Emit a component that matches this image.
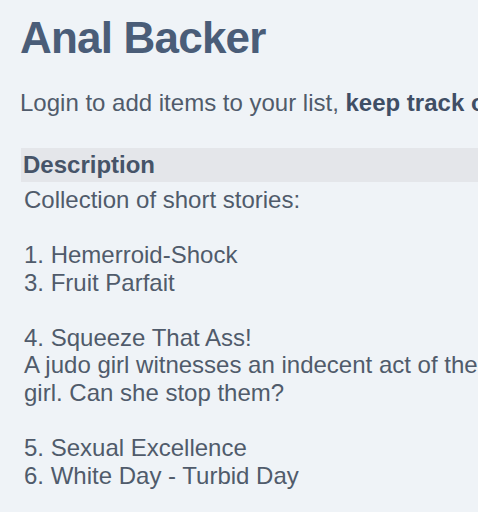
export default function App() {
  const desc = `Collection of short stories:

1. Hemerroid-Shock
3. Fruit Parfait

4. Squeeze That Ass!
A judo girl witnesses an indecent act of the swimming club captain with a
girl. Can she stop them?

5. Sexual Excellence
6. White Day - Turbid Day`;
  return (
    <div className="h-[512px] w-[478px] overflow-hidden bg-[#eff3f7] font-['Liberation_Sans',Arial,sans-serif]">
      <div className="w-[900px] pl-[20px] pt-[13px]">
        <h1 className="text-[44px] leading-[50.6px] font-bold text-[#4a5d78] tracking-[-0.8px] whitespace-nowrap">
          Anal Backer
        </h1>
        <p className="mt-[25px] text-[24px] leading-[27.6px] text-[#505b6b] whitespace-nowrap">
          Login to add items to your list, <b className="text-[#3f4e65]">keep track of your progress</b> and rate series!
        </p>
        <div className="mt-[32px] ml-[1px]">
          <div className="bg-[#e4e6ea] pl-[2px] py-[3px] text-[24px] leading-[27.6px] font-bold text-[#465468]">
            Description
          </div>
          <div className="mt-[4px] pl-[3px] text-[24px] leading-[27.6px] text-[#505b6b] whitespace-pre">
            {desc}
          </div>
        </div>
      </div>
    </div>
  );
}
